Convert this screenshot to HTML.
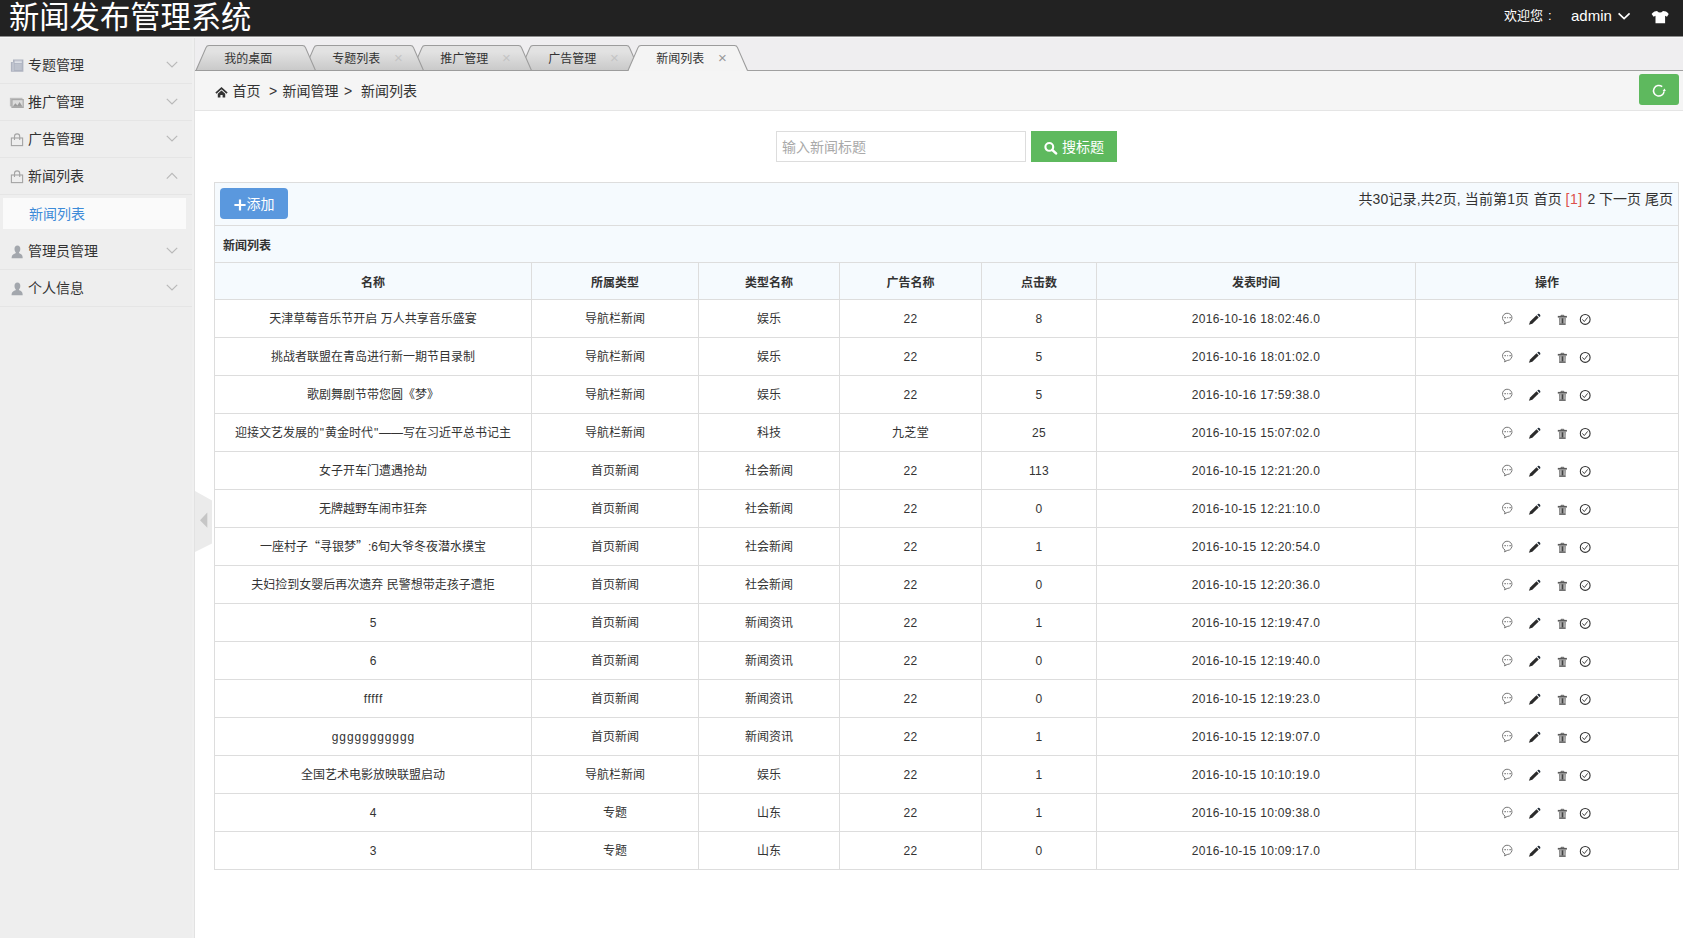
<!DOCTYPE html>
<html lang="zh-CN">
<head>
<meta charset="utf-8">
<title>新闻发布管理系统</title>
<style>
*{box-sizing:border-box;margin:0;padding:0}
html,body{width:1683px;height:938px;overflow:hidden;background:#fff}
body{font-family:"Liberation Sans","Noto Sans CJK SC",sans-serif;font-size:12px;color:#333;position:relative}
a{color:inherit;text-decoration:none}
ul{list-style:none}
/* header */
#hd{position:absolute;left:0;top:0;width:1683px;height:36px;background:#222;border-bottom:0;z-index:9;box-shadow:0 1px 0 #8c8c8c,0 2px 0 #f7f7f7}
#hd h1{position:absolute;left:9px;top:-4px;font-size:30.3px;line-height:44px;font-weight:400;color:#fff;white-space:nowrap;letter-spacing:0}
#hd .wel{position:absolute;left:1504px;top:6px;font-size:13px;line-height:20px;color:#fff;white-space:nowrap}
#hd .adm{position:absolute;left:1571px;top:6px;font-size:15px;line-height:20px;color:#fff;white-space:nowrap}
#hd svg{position:absolute}
/* sidebar */
#sb{position:absolute;left:0;top:37px;width:195px;height:901px;background:#eee;border-right:1px solid #e2e2e2;z-index:5;box-shadow:inset -2px 0 0 #f0f0f0}
#sb .mi{position:absolute;left:0;width:192px;height:37px;border-bottom:1px solid #e5e5e5;font-size:14px;line-height:37px;color:#333;padding-left:28px;white-space:nowrap}
#sb .mi svg{position:absolute}
#sb .sub{position:absolute;left:3px;top:161px;width:183px;height:31px;background:#fafafa;color:#3d8bd8;font-size:14px;line-height:33px;padding-left:26px}
/* tabs */
#tabs{position:absolute;left:194px;top:37px;width:1489px;height:34px;background:#efeef0}
#tabs .tt{position:absolute;top:12px;margin-left:1.3px;font-size:12px;line-height:20px;color:#333;white-space:nowrap}
#tabs .tx{position:absolute;top:11px;margin-left:-1.5px;font-size:15px;line-height:20px;color:#c4c4c4;width:12px;text-align:center}
#tabs .tx.on{color:#999}
/* crumb */
#crumb{position:absolute;left:194px;top:71px;width:1489px;height:40px;background:#f5f5f5;border-bottom:1px solid #e5e5e5;font-size:14px;line-height:40px;color:#333;white-space:nowrap}
#crumb span{position:absolute;top:0}
#refresh{position:absolute;left:1639px;top:74px;width:40px;height:31px;background:#5eb95e;border-radius:3px}
/* search */
#q{position:absolute;left:776px;top:131px;width:250px;height:31px;border:1px solid #ddd;background:#fff;font-size:14px;line-height:29px;color:#a9a9a9;padding:1px 0 0 5px}
#qb{position:absolute;left:1031px;top:131px;width:86px;height:31px;background:#5eb95e;color:#fff;font-size:14px;line-height:32px;padding-left:31px;white-space:nowrap}
/* panel */
#pn{position:absolute;left:214px;top:182px;width:1465px;height:688px;border:1px solid #ddd;background:#fff}
#tb{position:absolute;left:0;top:0;width:1463px;height:43px;background:#f5fafe;border-bottom:1px solid #ddd}
#add{position:absolute;left:5px;top:5px;width:68px;height:31px;background:#5a98de;border-radius:4px;color:#fff;font-size:14px;line-height:33px;padding-left:26.5px;white-space:nowrap}
#pg{position:absolute;right:5px;top:0;font-size:14px;line-height:32px;color:#333;white-space:nowrap}
#pg b{font-weight:400;color:#dd514c;letter-spacing:.5px;margin-right:.9px}
table{position:absolute;left:0;top:43px;width:1463px;border-collapse:separate;border-spacing:0;table-layout:fixed;font-size:12px}
caption{height:36px;line-height:41px;text-align:left;padding-left:8px;font-weight:700;background:#f5fafe;color:#333}
th,td{height:38px;line-height:20px;padding:0;border-top:1px solid #ddd;border-left:1px solid #ddd;text-align:center;vertical-align:middle;color:#333;white-space:nowrap;overflow:hidden}
th:first-child,td:first-child{border-left:0}
th{background:#f5fafe;font-weight:700;height:37px}
td.n{letter-spacing:.33px}
td.op{vertical-align:top;padding-top:12px;line-height:0}
td.op svg{display:block;margin:0 auto}
th{padding-top:4px}
.q{padding:0 .9px}
.fq{font-family:"Noto Sans CJK SC",sans-serif}
</style>
</head>
<body>
<div id="hd">
  <h1>新闻发布管理系统</h1>
  <span class="wel">欢迎您<i style="font-style:normal;margin-left:5px">:</i></span>
  <span class="adm">admin</span>
  <svg style="left:1616px;top:10px" width="16" height="12" viewBox="0 0 16 12"><path d="M2.6 3.4 L8.1 8.6 L13.6 3.4" fill="none" stroke="#fff" stroke-width="1.7"/></svg>
  <svg style="left:1651px;top:11px" width="18" height="13" viewBox="0 0 18 13"><path d="M6 0 Q9 3.2 12 0 L15 .5 Q17 1.5 17.7 3 L16 5.7 L14.1 4.7 V12.3 H4.5 V4.7 L2.6 5.7 L.6 3 Q1.5 1.5 3.5 .5 Z" fill="#fff"/></svg>
</div>
<div id="sb">
  <div class="mi" style="top:10px"><svg style="left:10px;top:12px" width="14" height="13" viewBox="0 0 14 13"><path d="M3 .4 H13.4 V12.8 H.9 V3 H3 Z" fill="#aeb3c0"/><path d="M3 3.4 V12" stroke="#d9dce3" stroke-width=".8"/><path d="M4.6 2.2 H11.8 M4.6 3.6 H11.8" stroke="#e4e6ec" stroke-width="1"/><path d="M4.6 6 H11.8 M4.6 8 H11.8 M4.6 10 H11.8" stroke="#d0d4dd" stroke-width=".9"/></svg>专题管理<svg style="left:165px;top:13px" width="14" height="10" viewBox="0 0 14 10"><path d="M1.8 1.8 L7 7 L12.2 1.8" fill="none" stroke="#b9b9b9" stroke-width="1.2"/></svg></div>
  <div class="mi" style="top:47px"><svg style="left:9px;top:13px" width="16" height="12" viewBox="0 0 16 12"><rect x=".9" y=".8" width="12.6" height="8.6" fill="#bdbdbd"/><rect x="2.4" y="2" width="12.4" height="9" fill="#a9a9a9"/><rect x="3.6" y="3.2" width="10" height="6.6" fill="#dcdcdc"/><path d="M3.6 9.8 L6.4 6.2 L8.4 8.4 L10.6 5 L13.6 9.8 Z" fill="#9c9c9c"/></svg>推广管理<svg style="left:165px;top:13px" width="14" height="10" viewBox="0 0 14 10"><path d="M1.8 1.8 L7 7 L12.2 1.8" fill="none" stroke="#b9b9b9" stroke-width="1.2"/></svg></div>
  <div class="mi" style="top:84px"><svg style="left:10px;top:12px" width="14" height="14" viewBox="0 0 14 14"><rect x="1.4" y="5" width="11.2" height="7.6" fill="none" stroke="#a4a4a4" stroke-width="1.1"/><path d="M4.5 7 V3.6 a2.6 2.7 0 0 1 5.2 0 V7" fill="none" stroke="#a4a4a4" stroke-width="1.1"/></svg>广告管理<svg style="left:165px;top:13px" width="14" height="10" viewBox="0 0 14 10"><path d="M1.8 1.8 L7 7 L12.2 1.8" fill="none" stroke="#b9b9b9" stroke-width="1.2"/></svg></div>
  <div class="mi" style="top:121px"><svg style="left:10px;top:12px" width="14" height="14" viewBox="0 0 14 14"><rect x="1.4" y="5" width="11.2" height="7.6" fill="none" stroke="#a4a4a4" stroke-width="1.1"/><path d="M4.5 7 V3.6 a2.6 2.7 0 0 1 5.2 0 V7" fill="none" stroke="#a4a4a4" stroke-width="1.1"/></svg>新闻列表<svg style="left:165px;top:13px" width="14" height="10" viewBox="0 0 14 10"><path d="M1.8 7.6 L7 2.4 L12.2 7.6" fill="none" stroke="#b9b9b9" stroke-width="1.2"/></svg></div>
  <div class="sub">新闻列表</div>
  <div class="mi" style="top:196px"><svg style="left:11px;top:12px" width="12" height="14" viewBox="0 0 12 14"><ellipse cx="6.4" cy="4" rx="2.9" ry="3.6" fill="#a3a7ad"/><path d="M.6 13.3 C.6 9.6 2.6 9 4.6 8.2 L4.9 6.5 H7.9 L8.2 8.2 C10.2 9 11.7 9.6 11.7 13.3 Z" fill="#a3a7ad"/></svg>管理员管理<svg style="left:165px;top:13px" width="14" height="10" viewBox="0 0 14 10"><path d="M1.8 1.8 L7 7 L12.2 1.8" fill="none" stroke="#b9b9b9" stroke-width="1.2"/></svg></div>
  <div class="mi" style="top:233px"><svg style="left:11px;top:12px" width="12" height="14" viewBox="0 0 12 14"><ellipse cx="6.4" cy="4" rx="2.9" ry="3.6" fill="#a3a7ad"/><path d="M.6 13.3 C.6 9.6 2.6 9 4.6 8.2 L4.9 6.5 H7.9 L8.2 8.2 C10.2 9 11.7 9.6 11.7 13.3 Z" fill="#a3a7ad"/></svg>个人信息<svg style="left:165px;top:13px" width="14" height="10" viewBox="0 0 14 10"><path d="M1.8 1.8 L7 7 L12.2 1.8" fill="none" stroke="#b9b9b9" stroke-width="1.2"/></svg></div>
</div>
<svg style="position:absolute;left:195px;top:491px;z-index:6" width="17" height="62" viewBox="0 0 17 62"><path d="M0 0 L17 9.6 V52.4 L0 61 Z" fill="#ebebeb"/><path d="M5 29.2 L12.3 21.6 V36.8 Z" fill="#c6c6c6"/></svg>
<div id="tabs"><svg width="1489" height="34" viewBox="0 0 1489 34" style="position:absolute;left:0;top:0"><defs><linearGradient id="tg" x1="0" y1="0" x2="0" y2="1"><stop offset="0.25" stop-color="#e2e2e2"/><stop offset="1" stop-color="#c9c9c9"/></linearGradient></defs><rect x="0" y="33" width="1489" height="1" fill="#a0a0a0"/><path d="M326.0 33.5 L336.0 10.6 Q336.8 8.5 339.0 8.5 H432.5 Q434.7 8.5 435.5 10.6 L445.5 33.5 Z" fill="url(#tg)" stroke="#9c9c9c" stroke-width="1.1"/><path d="M218.0 33.5 L228.0 10.6 Q228.8 8.5 231.0 8.5 H324.5 Q326.7 8.5 327.5 10.6 L337.5 33.5 Z" fill="url(#tg)" stroke="#9c9c9c" stroke-width="1.1"/><path d="M110.0 33.5 L120.0 10.6 Q120.8 8.5 123.0 8.5 H216.5 Q218.7 8.5 219.5 10.6 L229.5 33.5 Z" fill="url(#tg)" stroke="#9c9c9c" stroke-width="1.1"/><path d="M2.0 33.5 L12.0 10.6 Q12.8 8.5 15.0 8.5 H108.5 Q110.7 8.5 111.5 10.6 L121.5 33.5 Z" fill="url(#tg)" stroke="#9c9c9c" stroke-width="1.1"/><rect x="435" y="33" width="118" height="1" fill="#f4f4f4"/><path d="M434.0 33.5 L444.0 10.6 Q444.8 8.5 447.0 8.5 H540.5 Q542.7 8.5 543.5 10.6 L553.5 33.5" fill="#f4f4f4" stroke="#9c9c9c" stroke-width="1.1"/></svg><span class="tt" style="left:29px">我的桌面</span><span class="tt" style="left:137px">专题列表</span><span class="tx" style="left:200px">×</span><span class="tt" style="left:245px">推广管理</span><span class="tx" style="left:308px">×</span><span class="tt" style="left:353px">广告管理</span><span class="tx" style="left:416px">×</span><span class="tt" style="left:461px">新闻列表</span><span class="tx on" style="left:524px">×</span></div>
<div id="crumb"><svg style="position:absolute;left:20.5px;top:16px" width="13" height="11.14" viewBox="0 0 14 12"><path d="M1 6.6 L7 1.3 L13 6.6" fill="none" stroke="#333" stroke-width="1.9"/><path d="M3 7.4 L7 3.8 L11 7.4 V11.4 H8.2 V8.6 H5.8 V11.4 H3 Z" fill="#333"/></svg><span style="left:38.5px">首页</span><span style="left:75px">&gt;</span><span style="left:88.5px">新闻管理</span><span style="left:150px">&gt;</span><span style="left:167px">新闻列表</span></div>
<div id="refresh"><svg style="position:absolute;left:11px;top:8px" width="18" height="18" viewBox="0 0 18 18"><path d="M12.2 4.7 A5.3 5.3 0 1 0 14.1 9.2" fill="none" stroke="#fff" stroke-width="1.5"/><path d="M12.6 9 H15.8 L14.6 6.6 Z" fill="#fff"/></svg></div>
<div id="q">输入新闻标题</div>
<div id="qb"><svg style="position:absolute;left:12px;top:10px" width="15" height="14" viewBox="0 0 15 14"><circle cx="6.3" cy="5.9" r="3.9" fill="none" stroke="#fff" stroke-width="2.1"/><path d="M9.2 8.9 L13 12.4" stroke="#fff" stroke-width="2.6" stroke-linecap="round"/></svg>搜标题</div>
<div id="pn">
  <div id="tb"><div id="add"><svg style="position:absolute;left:14px;top:11px" width="12" height="12" viewBox="0 0 12 12"><path d="M6 .4 V11.6 M.4 6 H11.6" stroke="#fff" stroke-width="2.2"/></svg>添加</div><div id="pg"><span style="letter-spacing:.12px;margin-right:.6px">共30记录,共2页, 当前第1页</span> 首页 <b>[1]</b> 2 下一页 尾页</div></div>
  <table>
    <caption>新闻列表</caption>
    <colgroup><col style="width:316px"><col style="width:167px"><col style="width:141px"><col style="width:142px"><col style="width:115px"><col style="width:319px"><col></colgroup>
    <thead><tr><th>名称</th><th>所属类型</th><th>类型名称</th><th>广告名称</th><th>点击数</th><th>发表时间</th><th>操作</th></tr></thead>
    <tbody id="rows">
    <tr><td>天津草莓音乐节开启 万人共享音乐盛宴</td><td>导航栏新闻</td><td>娱乐</td><td class="n">22</td><td class="n">8</td><td class="n">2016-10-16 18:02:46.0</td><td class="op"><svg width="90" height="14" viewBox="0 0 90 14"><path d="M3.1 10 A4.75 4.65 0 1 1 5.2 10.5 L2.5 11.9 Z" fill="#fff" stroke="#777" stroke-width="1"/><circle cx="3.1" cy="5.7" r=".65" fill="#444"/><circle cx="5.6" cy="5.7" r=".6" fill="#888"/><circle cx="8.1" cy="5.7" r=".65" fill="#444"/><g transform="translate(-.6 0)"><path d="M27.5 12.8 L28.7 9.6 L35.1 3.3 L37.3 5.5 L30.9 11.8 Z" fill="#2b2b2b"/><path d="M35.9 2.6 L36.9 1.8 Q37.7 1.6 38.5 2.6 Q39.3 3.6 38.9 4.2 L38 5 Z" fill="#1f2a36"/><path d="M59.6 4 V3.3 H62.4 V4" fill="none" stroke="#555" stroke-width=".9"/><rect x="56.4" y="3.9" width="9.1" height="1.7" fill="#5a5a5a"/><path d="M57.5 5.6 H64.5 L64.2 12.9 H57.8 Z" fill="#8c8c8c"/><rect x="60.6" y="6.4" width=".9" height="5" fill="#3c3c3c"/><rect x="58.7" y="6.4" width=".8" height="5" fill="#b5b5b5"/><rect x="62.6" y="6.4" width=".8" height="5" fill="#b5b5b5"/><rect x="58" y="11.6" width="6" height="1.3" fill="#6e6e6e"/><circle cx="83.8" cy="7.45" r="4.9" fill="none" stroke="#333" stroke-width="1.1"/><path d="M81 7.4 L82.9 9.6 L86.2 5.4" fill="none" stroke="#444" stroke-width="1"/></g></svg></td></tr>
    <tr><td>挑战者联盟在青岛进行新一期节目录制</td><td>导航栏新闻</td><td>娱乐</td><td class="n">22</td><td class="n">5</td><td class="n">2016-10-16 18:01:02.0</td><td class="op"><svg width="90" height="14" viewBox="0 0 90 14"><path d="M3.1 10 A4.75 4.65 0 1 1 5.2 10.5 L2.5 11.9 Z" fill="#fff" stroke="#777" stroke-width="1"/><circle cx="3.1" cy="5.7" r=".65" fill="#444"/><circle cx="5.6" cy="5.7" r=".6" fill="#888"/><circle cx="8.1" cy="5.7" r=".65" fill="#444"/><g transform="translate(-.6 0)"><path d="M27.5 12.8 L28.7 9.6 L35.1 3.3 L37.3 5.5 L30.9 11.8 Z" fill="#2b2b2b"/><path d="M35.9 2.6 L36.9 1.8 Q37.7 1.6 38.5 2.6 Q39.3 3.6 38.9 4.2 L38 5 Z" fill="#1f2a36"/><path d="M59.6 4 V3.3 H62.4 V4" fill="none" stroke="#555" stroke-width=".9"/><rect x="56.4" y="3.9" width="9.1" height="1.7" fill="#5a5a5a"/><path d="M57.5 5.6 H64.5 L64.2 12.9 H57.8 Z" fill="#8c8c8c"/><rect x="60.6" y="6.4" width=".9" height="5" fill="#3c3c3c"/><rect x="58.7" y="6.4" width=".8" height="5" fill="#b5b5b5"/><rect x="62.6" y="6.4" width=".8" height="5" fill="#b5b5b5"/><rect x="58" y="11.6" width="6" height="1.3" fill="#6e6e6e"/><circle cx="83.8" cy="7.45" r="4.9" fill="none" stroke="#333" stroke-width="1.1"/><path d="M81 7.4 L82.9 9.6 L86.2 5.4" fill="none" stroke="#444" stroke-width="1"/></g></svg></td></tr>
    <tr><td>歌剧舞剧节带您圆《梦》</td><td>导航栏新闻</td><td>娱乐</td><td class="n">22</td><td class="n">5</td><td class="n">2016-10-16 17:59:38.0</td><td class="op"><svg width="90" height="14" viewBox="0 0 90 14"><path d="M3.1 10 A4.75 4.65 0 1 1 5.2 10.5 L2.5 11.9 Z" fill="#fff" stroke="#777" stroke-width="1"/><circle cx="3.1" cy="5.7" r=".65" fill="#444"/><circle cx="5.6" cy="5.7" r=".6" fill="#888"/><circle cx="8.1" cy="5.7" r=".65" fill="#444"/><g transform="translate(-.6 0)"><path d="M27.5 12.8 L28.7 9.6 L35.1 3.3 L37.3 5.5 L30.9 11.8 Z" fill="#2b2b2b"/><path d="M35.9 2.6 L36.9 1.8 Q37.7 1.6 38.5 2.6 Q39.3 3.6 38.9 4.2 L38 5 Z" fill="#1f2a36"/><path d="M59.6 4 V3.3 H62.4 V4" fill="none" stroke="#555" stroke-width=".9"/><rect x="56.4" y="3.9" width="9.1" height="1.7" fill="#5a5a5a"/><path d="M57.5 5.6 H64.5 L64.2 12.9 H57.8 Z" fill="#8c8c8c"/><rect x="60.6" y="6.4" width=".9" height="5" fill="#3c3c3c"/><rect x="58.7" y="6.4" width=".8" height="5" fill="#b5b5b5"/><rect x="62.6" y="6.4" width=".8" height="5" fill="#b5b5b5"/><rect x="58" y="11.6" width="6" height="1.3" fill="#6e6e6e"/><circle cx="83.8" cy="7.45" r="4.9" fill="none" stroke="#333" stroke-width="1.1"/><path d="M81 7.4 L82.9 9.6 L86.2 5.4" fill="none" stroke="#444" stroke-width="1"/></g></svg></td></tr>
    <tr><td>迎接文艺发展的<span class="q">&quot;</span>黄金时代<span class="q">&quot;</span>——写在习近平总书记主</td><td>导航栏新闻</td><td>科技</td><td class="n">九芝堂</td><td class="n">25</td><td class="n">2016-10-15 15:07:02.0</td><td class="op"><svg width="90" height="14" viewBox="0 0 90 14"><path d="M3.1 10 A4.75 4.65 0 1 1 5.2 10.5 L2.5 11.9 Z" fill="#fff" stroke="#777" stroke-width="1"/><circle cx="3.1" cy="5.7" r=".65" fill="#444"/><circle cx="5.6" cy="5.7" r=".6" fill="#888"/><circle cx="8.1" cy="5.7" r=".65" fill="#444"/><g transform="translate(-.6 0)"><path d="M27.5 12.8 L28.7 9.6 L35.1 3.3 L37.3 5.5 L30.9 11.8 Z" fill="#2b2b2b"/><path d="M35.9 2.6 L36.9 1.8 Q37.7 1.6 38.5 2.6 Q39.3 3.6 38.9 4.2 L38 5 Z" fill="#1f2a36"/><path d="M59.6 4 V3.3 H62.4 V4" fill="none" stroke="#555" stroke-width=".9"/><rect x="56.4" y="3.9" width="9.1" height="1.7" fill="#5a5a5a"/><path d="M57.5 5.6 H64.5 L64.2 12.9 H57.8 Z" fill="#8c8c8c"/><rect x="60.6" y="6.4" width=".9" height="5" fill="#3c3c3c"/><rect x="58.7" y="6.4" width=".8" height="5" fill="#b5b5b5"/><rect x="62.6" y="6.4" width=".8" height="5" fill="#b5b5b5"/><rect x="58" y="11.6" width="6" height="1.3" fill="#6e6e6e"/><circle cx="83.8" cy="7.45" r="4.9" fill="none" stroke="#333" stroke-width="1.1"/><path d="M81 7.4 L82.9 9.6 L86.2 5.4" fill="none" stroke="#444" stroke-width="1"/></g></svg></td></tr>
    <tr><td>女子开车门遭遇抢劫</td><td>首页新闻</td><td>社会新闻</td><td class="n">22</td><td class="n">113</td><td class="n">2016-10-15 12:21:20.0</td><td class="op"><svg width="90" height="14" viewBox="0 0 90 14"><path d="M3.1 10 A4.75 4.65 0 1 1 5.2 10.5 L2.5 11.9 Z" fill="#fff" stroke="#777" stroke-width="1"/><circle cx="3.1" cy="5.7" r=".65" fill="#444"/><circle cx="5.6" cy="5.7" r=".6" fill="#888"/><circle cx="8.1" cy="5.7" r=".65" fill="#444"/><g transform="translate(-.6 0)"><path d="M27.5 12.8 L28.7 9.6 L35.1 3.3 L37.3 5.5 L30.9 11.8 Z" fill="#2b2b2b"/><path d="M35.9 2.6 L36.9 1.8 Q37.7 1.6 38.5 2.6 Q39.3 3.6 38.9 4.2 L38 5 Z" fill="#1f2a36"/><path d="M59.6 4 V3.3 H62.4 V4" fill="none" stroke="#555" stroke-width=".9"/><rect x="56.4" y="3.9" width="9.1" height="1.7" fill="#5a5a5a"/><path d="M57.5 5.6 H64.5 L64.2 12.9 H57.8 Z" fill="#8c8c8c"/><rect x="60.6" y="6.4" width=".9" height="5" fill="#3c3c3c"/><rect x="58.7" y="6.4" width=".8" height="5" fill="#b5b5b5"/><rect x="62.6" y="6.4" width=".8" height="5" fill="#b5b5b5"/><rect x="58" y="11.6" width="6" height="1.3" fill="#6e6e6e"/><circle cx="83.8" cy="7.45" r="4.9" fill="none" stroke="#333" stroke-width="1.1"/><path d="M81 7.4 L82.9 9.6 L86.2 5.4" fill="none" stroke="#444" stroke-width="1"/></g></svg></td></tr>
    <tr><td>无牌越野车闹市狂奔</td><td>首页新闻</td><td>社会新闻</td><td class="n">22</td><td class="n">0</td><td class="n">2016-10-15 12:21:10.0</td><td class="op"><svg width="90" height="14" viewBox="0 0 90 14"><path d="M3.1 10 A4.75 4.65 0 1 1 5.2 10.5 L2.5 11.9 Z" fill="#fff" stroke="#777" stroke-width="1"/><circle cx="3.1" cy="5.7" r=".65" fill="#444"/><circle cx="5.6" cy="5.7" r=".6" fill="#888"/><circle cx="8.1" cy="5.7" r=".65" fill="#444"/><g transform="translate(-.6 0)"><path d="M27.5 12.8 L28.7 9.6 L35.1 3.3 L37.3 5.5 L30.9 11.8 Z" fill="#2b2b2b"/><path d="M35.9 2.6 L36.9 1.8 Q37.7 1.6 38.5 2.6 Q39.3 3.6 38.9 4.2 L38 5 Z" fill="#1f2a36"/><path d="M59.6 4 V3.3 H62.4 V4" fill="none" stroke="#555" stroke-width=".9"/><rect x="56.4" y="3.9" width="9.1" height="1.7" fill="#5a5a5a"/><path d="M57.5 5.6 H64.5 L64.2 12.9 H57.8 Z" fill="#8c8c8c"/><rect x="60.6" y="6.4" width=".9" height="5" fill="#3c3c3c"/><rect x="58.7" y="6.4" width=".8" height="5" fill="#b5b5b5"/><rect x="62.6" y="6.4" width=".8" height="5" fill="#b5b5b5"/><rect x="58" y="11.6" width="6" height="1.3" fill="#6e6e6e"/><circle cx="83.8" cy="7.45" r="4.9" fill="none" stroke="#333" stroke-width="1.1"/><path d="M81 7.4 L82.9 9.6 L86.2 5.4" fill="none" stroke="#444" stroke-width="1"/></g></svg></td></tr>
    <tr><td>一座村子<span class="fq">“</span>寻银梦<span class="fq">”</span>:6旬大爷冬夜潜水摸宝</td><td>首页新闻</td><td>社会新闻</td><td class="n">22</td><td class="n">1</td><td class="n">2016-10-15 12:20:54.0</td><td class="op"><svg width="90" height="14" viewBox="0 0 90 14"><path d="M3.1 10 A4.75 4.65 0 1 1 5.2 10.5 L2.5 11.9 Z" fill="#fff" stroke="#777" stroke-width="1"/><circle cx="3.1" cy="5.7" r=".65" fill="#444"/><circle cx="5.6" cy="5.7" r=".6" fill="#888"/><circle cx="8.1" cy="5.7" r=".65" fill="#444"/><g transform="translate(-.6 0)"><path d="M27.5 12.8 L28.7 9.6 L35.1 3.3 L37.3 5.5 L30.9 11.8 Z" fill="#2b2b2b"/><path d="M35.9 2.6 L36.9 1.8 Q37.7 1.6 38.5 2.6 Q39.3 3.6 38.9 4.2 L38 5 Z" fill="#1f2a36"/><path d="M59.6 4 V3.3 H62.4 V4" fill="none" stroke="#555" stroke-width=".9"/><rect x="56.4" y="3.9" width="9.1" height="1.7" fill="#5a5a5a"/><path d="M57.5 5.6 H64.5 L64.2 12.9 H57.8 Z" fill="#8c8c8c"/><rect x="60.6" y="6.4" width=".9" height="5" fill="#3c3c3c"/><rect x="58.7" y="6.4" width=".8" height="5" fill="#b5b5b5"/><rect x="62.6" y="6.4" width=".8" height="5" fill="#b5b5b5"/><rect x="58" y="11.6" width="6" height="1.3" fill="#6e6e6e"/><circle cx="83.8" cy="7.45" r="4.9" fill="none" stroke="#333" stroke-width="1.1"/><path d="M81 7.4 L82.9 9.6 L86.2 5.4" fill="none" stroke="#444" stroke-width="1"/></g></svg></td></tr>
    <tr><td>夫妇捡到女婴后再次遗弃 民警想带走孩子遭拒</td><td>首页新闻</td><td>社会新闻</td><td class="n">22</td><td class="n">0</td><td class="n">2016-10-15 12:20:36.0</td><td class="op"><svg width="90" height="14" viewBox="0 0 90 14"><path d="M3.1 10 A4.75 4.65 0 1 1 5.2 10.5 L2.5 11.9 Z" fill="#fff" stroke="#777" stroke-width="1"/><circle cx="3.1" cy="5.7" r=".65" fill="#444"/><circle cx="5.6" cy="5.7" r=".6" fill="#888"/><circle cx="8.1" cy="5.7" r=".65" fill="#444"/><g transform="translate(-.6 0)"><path d="M27.5 12.8 L28.7 9.6 L35.1 3.3 L37.3 5.5 L30.9 11.8 Z" fill="#2b2b2b"/><path d="M35.9 2.6 L36.9 1.8 Q37.7 1.6 38.5 2.6 Q39.3 3.6 38.9 4.2 L38 5 Z" fill="#1f2a36"/><path d="M59.6 4 V3.3 H62.4 V4" fill="none" stroke="#555" stroke-width=".9"/><rect x="56.4" y="3.9" width="9.1" height="1.7" fill="#5a5a5a"/><path d="M57.5 5.6 H64.5 L64.2 12.9 H57.8 Z" fill="#8c8c8c"/><rect x="60.6" y="6.4" width=".9" height="5" fill="#3c3c3c"/><rect x="58.7" y="6.4" width=".8" height="5" fill="#b5b5b5"/><rect x="62.6" y="6.4" width=".8" height="5" fill="#b5b5b5"/><rect x="58" y="11.6" width="6" height="1.3" fill="#6e6e6e"/><circle cx="83.8" cy="7.45" r="4.9" fill="none" stroke="#333" stroke-width="1.1"/><path d="M81 7.4 L82.9 9.6 L86.2 5.4" fill="none" stroke="#444" stroke-width="1"/></g></svg></td></tr>
    <tr><td>5</td><td>首页新闻</td><td>新闻资讯</td><td class="n">22</td><td class="n">1</td><td class="n">2016-10-15 12:19:47.0</td><td class="op"><svg width="90" height="14" viewBox="0 0 90 14"><path d="M3.1 10 A4.75 4.65 0 1 1 5.2 10.5 L2.5 11.9 Z" fill="#fff" stroke="#777" stroke-width="1"/><circle cx="3.1" cy="5.7" r=".65" fill="#444"/><circle cx="5.6" cy="5.7" r=".6" fill="#888"/><circle cx="8.1" cy="5.7" r=".65" fill="#444"/><g transform="translate(-.6 0)"><path d="M27.5 12.8 L28.7 9.6 L35.1 3.3 L37.3 5.5 L30.9 11.8 Z" fill="#2b2b2b"/><path d="M35.9 2.6 L36.9 1.8 Q37.7 1.6 38.5 2.6 Q39.3 3.6 38.9 4.2 L38 5 Z" fill="#1f2a36"/><path d="M59.6 4 V3.3 H62.4 V4" fill="none" stroke="#555" stroke-width=".9"/><rect x="56.4" y="3.9" width="9.1" height="1.7" fill="#5a5a5a"/><path d="M57.5 5.6 H64.5 L64.2 12.9 H57.8 Z" fill="#8c8c8c"/><rect x="60.6" y="6.4" width=".9" height="5" fill="#3c3c3c"/><rect x="58.7" y="6.4" width=".8" height="5" fill="#b5b5b5"/><rect x="62.6" y="6.4" width=".8" height="5" fill="#b5b5b5"/><rect x="58" y="11.6" width="6" height="1.3" fill="#6e6e6e"/><circle cx="83.8" cy="7.45" r="4.9" fill="none" stroke="#333" stroke-width="1.1"/><path d="M81 7.4 L82.9 9.6 L86.2 5.4" fill="none" stroke="#444" stroke-width="1"/></g></svg></td></tr>
    <tr><td>6</td><td>首页新闻</td><td>新闻资讯</td><td class="n">22</td><td class="n">0</td><td class="n">2016-10-15 12:19:40.0</td><td class="op"><svg width="90" height="14" viewBox="0 0 90 14"><path d="M3.1 10 A4.75 4.65 0 1 1 5.2 10.5 L2.5 11.9 Z" fill="#fff" stroke="#777" stroke-width="1"/><circle cx="3.1" cy="5.7" r=".65" fill="#444"/><circle cx="5.6" cy="5.7" r=".6" fill="#888"/><circle cx="8.1" cy="5.7" r=".65" fill="#444"/><g transform="translate(-.6 0)"><path d="M27.5 12.8 L28.7 9.6 L35.1 3.3 L37.3 5.5 L30.9 11.8 Z" fill="#2b2b2b"/><path d="M35.9 2.6 L36.9 1.8 Q37.7 1.6 38.5 2.6 Q39.3 3.6 38.9 4.2 L38 5 Z" fill="#1f2a36"/><path d="M59.6 4 V3.3 H62.4 V4" fill="none" stroke="#555" stroke-width=".9"/><rect x="56.4" y="3.9" width="9.1" height="1.7" fill="#5a5a5a"/><path d="M57.5 5.6 H64.5 L64.2 12.9 H57.8 Z" fill="#8c8c8c"/><rect x="60.6" y="6.4" width=".9" height="5" fill="#3c3c3c"/><rect x="58.7" y="6.4" width=".8" height="5" fill="#b5b5b5"/><rect x="62.6" y="6.4" width=".8" height="5" fill="#b5b5b5"/><rect x="58" y="11.6" width="6" height="1.3" fill="#6e6e6e"/><circle cx="83.8" cy="7.45" r="4.9" fill="none" stroke="#333" stroke-width="1.1"/><path d="M81 7.4 L82.9 9.6 L86.2 5.4" fill="none" stroke="#444" stroke-width="1"/></g></svg></td></tr>
    <tr><td><span style="letter-spacing:.67px;margin-left:.67px">fffff</span></td><td>首页新闻</td><td>新闻资讯</td><td class="n">22</td><td class="n">0</td><td class="n">2016-10-15 12:19:23.0</td><td class="op"><svg width="90" height="14" viewBox="0 0 90 14"><path d="M3.1 10 A4.75 4.65 0 1 1 5.2 10.5 L2.5 11.9 Z" fill="#fff" stroke="#777" stroke-width="1"/><circle cx="3.1" cy="5.7" r=".65" fill="#444"/><circle cx="5.6" cy="5.7" r=".6" fill="#888"/><circle cx="8.1" cy="5.7" r=".65" fill="#444"/><g transform="translate(-.6 0)"><path d="M27.5 12.8 L28.7 9.6 L35.1 3.3 L37.3 5.5 L30.9 11.8 Z" fill="#2b2b2b"/><path d="M35.9 2.6 L36.9 1.8 Q37.7 1.6 38.5 2.6 Q39.3 3.6 38.9 4.2 L38 5 Z" fill="#1f2a36"/><path d="M59.6 4 V3.3 H62.4 V4" fill="none" stroke="#555" stroke-width=".9"/><rect x="56.4" y="3.9" width="9.1" height="1.7" fill="#5a5a5a"/><path d="M57.5 5.6 H64.5 L64.2 12.9 H57.8 Z" fill="#8c8c8c"/><rect x="60.6" y="6.4" width=".9" height="5" fill="#3c3c3c"/><rect x="58.7" y="6.4" width=".8" height="5" fill="#b5b5b5"/><rect x="62.6" y="6.4" width=".8" height="5" fill="#b5b5b5"/><rect x="58" y="11.6" width="6" height="1.3" fill="#6e6e6e"/><circle cx="83.8" cy="7.45" r="4.9" fill="none" stroke="#333" stroke-width="1.1"/><path d="M81 7.4 L82.9 9.6 L86.2 5.4" fill="none" stroke="#444" stroke-width="1"/></g></svg></td></tr>
    <tr><td><span style="letter-spacing:.9px;margin-left:.9px">ggggggggggg</span></td><td>首页新闻</td><td>新闻资讯</td><td class="n">22</td><td class="n">1</td><td class="n">2016-10-15 12:19:07.0</td><td class="op"><svg width="90" height="14" viewBox="0 0 90 14"><path d="M3.1 10 A4.75 4.65 0 1 1 5.2 10.5 L2.5 11.9 Z" fill="#fff" stroke="#777" stroke-width="1"/><circle cx="3.1" cy="5.7" r=".65" fill="#444"/><circle cx="5.6" cy="5.7" r=".6" fill="#888"/><circle cx="8.1" cy="5.7" r=".65" fill="#444"/><g transform="translate(-.6 0)"><path d="M27.5 12.8 L28.7 9.6 L35.1 3.3 L37.3 5.5 L30.9 11.8 Z" fill="#2b2b2b"/><path d="M35.9 2.6 L36.9 1.8 Q37.7 1.6 38.5 2.6 Q39.3 3.6 38.9 4.2 L38 5 Z" fill="#1f2a36"/><path d="M59.6 4 V3.3 H62.4 V4" fill="none" stroke="#555" stroke-width=".9"/><rect x="56.4" y="3.9" width="9.1" height="1.7" fill="#5a5a5a"/><path d="M57.5 5.6 H64.5 L64.2 12.9 H57.8 Z" fill="#8c8c8c"/><rect x="60.6" y="6.4" width=".9" height="5" fill="#3c3c3c"/><rect x="58.7" y="6.4" width=".8" height="5" fill="#b5b5b5"/><rect x="62.6" y="6.4" width=".8" height="5" fill="#b5b5b5"/><rect x="58" y="11.6" width="6" height="1.3" fill="#6e6e6e"/><circle cx="83.8" cy="7.45" r="4.9" fill="none" stroke="#333" stroke-width="1.1"/><path d="M81 7.4 L82.9 9.6 L86.2 5.4" fill="none" stroke="#444" stroke-width="1"/></g></svg></td></tr>
    <tr><td>全国艺术电影放映联盟启动</td><td>导航栏新闻</td><td>娱乐</td><td class="n">22</td><td class="n">1</td><td class="n">2016-10-15 10:10:19.0</td><td class="op"><svg width="90" height="14" viewBox="0 0 90 14"><path d="M3.1 10 A4.75 4.65 0 1 1 5.2 10.5 L2.5 11.9 Z" fill="#fff" stroke="#777" stroke-width="1"/><circle cx="3.1" cy="5.7" r=".65" fill="#444"/><circle cx="5.6" cy="5.7" r=".6" fill="#888"/><circle cx="8.1" cy="5.7" r=".65" fill="#444"/><g transform="translate(-.6 0)"><path d="M27.5 12.8 L28.7 9.6 L35.1 3.3 L37.3 5.5 L30.9 11.8 Z" fill="#2b2b2b"/><path d="M35.9 2.6 L36.9 1.8 Q37.7 1.6 38.5 2.6 Q39.3 3.6 38.9 4.2 L38 5 Z" fill="#1f2a36"/><path d="M59.6 4 V3.3 H62.4 V4" fill="none" stroke="#555" stroke-width=".9"/><rect x="56.4" y="3.9" width="9.1" height="1.7" fill="#5a5a5a"/><path d="M57.5 5.6 H64.5 L64.2 12.9 H57.8 Z" fill="#8c8c8c"/><rect x="60.6" y="6.4" width=".9" height="5" fill="#3c3c3c"/><rect x="58.7" y="6.4" width=".8" height="5" fill="#b5b5b5"/><rect x="62.6" y="6.4" width=".8" height="5" fill="#b5b5b5"/><rect x="58" y="11.6" width="6" height="1.3" fill="#6e6e6e"/><circle cx="83.8" cy="7.45" r="4.9" fill="none" stroke="#333" stroke-width="1.1"/><path d="M81 7.4 L82.9 9.6 L86.2 5.4" fill="none" stroke="#444" stroke-width="1"/></g></svg></td></tr>
    <tr><td>4</td><td>专题</td><td>山东</td><td class="n">22</td><td class="n">1</td><td class="n">2016-10-15 10:09:38.0</td><td class="op"><svg width="90" height="14" viewBox="0 0 90 14"><path d="M3.1 10 A4.75 4.65 0 1 1 5.2 10.5 L2.5 11.9 Z" fill="#fff" stroke="#777" stroke-width="1"/><circle cx="3.1" cy="5.7" r=".65" fill="#444"/><circle cx="5.6" cy="5.7" r=".6" fill="#888"/><circle cx="8.1" cy="5.7" r=".65" fill="#444"/><g transform="translate(-.6 0)"><path d="M27.5 12.8 L28.7 9.6 L35.1 3.3 L37.3 5.5 L30.9 11.8 Z" fill="#2b2b2b"/><path d="M35.9 2.6 L36.9 1.8 Q37.7 1.6 38.5 2.6 Q39.3 3.6 38.9 4.2 L38 5 Z" fill="#1f2a36"/><path d="M59.6 4 V3.3 H62.4 V4" fill="none" stroke="#555" stroke-width=".9"/><rect x="56.4" y="3.9" width="9.1" height="1.7" fill="#5a5a5a"/><path d="M57.5 5.6 H64.5 L64.2 12.9 H57.8 Z" fill="#8c8c8c"/><rect x="60.6" y="6.4" width=".9" height="5" fill="#3c3c3c"/><rect x="58.7" y="6.4" width=".8" height="5" fill="#b5b5b5"/><rect x="62.6" y="6.4" width=".8" height="5" fill="#b5b5b5"/><rect x="58" y="11.6" width="6" height="1.3" fill="#6e6e6e"/><circle cx="83.8" cy="7.45" r="4.9" fill="none" stroke="#333" stroke-width="1.1"/><path d="M81 7.4 L82.9 9.6 L86.2 5.4" fill="none" stroke="#444" stroke-width="1"/></g></svg></td></tr>
    <tr><td>3</td><td>专题</td><td>山东</td><td class="n">22</td><td class="n">0</td><td class="n">2016-10-15 10:09:17.0</td><td class="op"><svg width="90" height="14" viewBox="0 0 90 14"><path d="M3.1 10 A4.75 4.65 0 1 1 5.2 10.5 L2.5 11.9 Z" fill="#fff" stroke="#777" stroke-width="1"/><circle cx="3.1" cy="5.7" r=".65" fill="#444"/><circle cx="5.6" cy="5.7" r=".6" fill="#888"/><circle cx="8.1" cy="5.7" r=".65" fill="#444"/><g transform="translate(-.6 0)"><path d="M27.5 12.8 L28.7 9.6 L35.1 3.3 L37.3 5.5 L30.9 11.8 Z" fill="#2b2b2b"/><path d="M35.9 2.6 L36.9 1.8 Q37.7 1.6 38.5 2.6 Q39.3 3.6 38.9 4.2 L38 5 Z" fill="#1f2a36"/><path d="M59.6 4 V3.3 H62.4 V4" fill="none" stroke="#555" stroke-width=".9"/><rect x="56.4" y="3.9" width="9.1" height="1.7" fill="#5a5a5a"/><path d="M57.5 5.6 H64.5 L64.2 12.9 H57.8 Z" fill="#8c8c8c"/><rect x="60.6" y="6.4" width=".9" height="5" fill="#3c3c3c"/><rect x="58.7" y="6.4" width=".8" height="5" fill="#b5b5b5"/><rect x="62.6" y="6.4" width=".8" height="5" fill="#b5b5b5"/><rect x="58" y="11.6" width="6" height="1.3" fill="#6e6e6e"/><circle cx="83.8" cy="7.45" r="4.9" fill="none" stroke="#333" stroke-width="1.1"/><path d="M81 7.4 L82.9 9.6 L86.2 5.4" fill="none" stroke="#444" stroke-width="1"/></g></svg></td></tr>
    </tbody>
  </table>
</div>
</body>
</html>
